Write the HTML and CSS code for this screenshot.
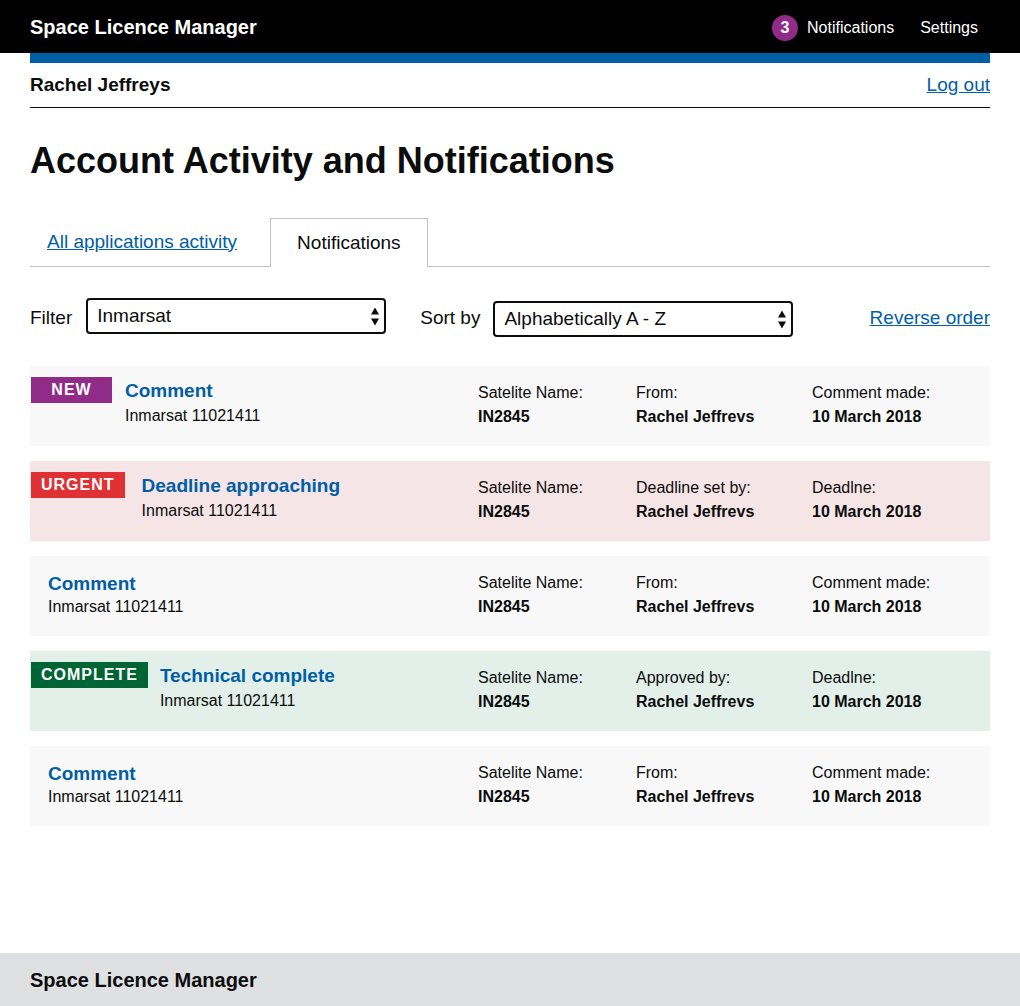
FILE: index.html
```html
<!DOCTYPE html>
<html lang="en">
<head>
<meta charset="utf-8">
<title>Space Licence Manager</title>
<link rel="stylesheet" href="styles.css">
</head>
<body>
<header class="top">
  <div class="brand">Space Licence Manager</div>
  <nav class="topnav">
    <span class="badge">3</span>
    <a class="navlink" href="#">Notifications</a>
    <a class="navlink settings" href="#">Settings</a>
  </nav>
</header>
<div class="wrap">
  <div class="bluebar"></div>
  <div class="userrow">
    <span class="username">Rachel Jeffreys</span>
    <a class="link" href="#">Log out</a>
  </div>
  <h1 class="title">Account Activity and Notifications</h1>
  <div class="tabs">
    <a class="tab link" href="#">All applications activity</a>
    <span class="tab active">Notifications</span>
  </div>
  <div class="filters">
    <label class="flabel">Filter</label>
    <div class="select sel-filter">
      <span>Inmarsat</span>
      <svg class="arrows" width="8" height="19" viewBox="0 0 8 19"><path d="M0 7.5 L4 0.5 L8 7.5 Z M0 11.5 L8 11.5 L4 18.5 Z" fill="#0b0c0c"/></svg>
    </div>
    <label class="flabel sortlabel">Sort by</label>
    <div class="select sel-sort">
      <span>Alphabetically A - Z</span>
      <svg class="arrows" width="8" height="19" viewBox="0 0 8 19"><path d="M0 7.5 L4 0.5 L8 7.5 Z M0 11.5 L8 11.5 L4 18.5 Z" fill="#0b0c0c"/></svg>
    </div>
    <a class="link reverse" href="#">Reverse order</a>
  </div>

  <div class="list">
    <div class="item grey">
      <div class="main tagged">
        <span class="tag tag-new">NEW</span>
        <div class="head">
          <a class="itemtitle" href="#">Comment</a>
          <div class="sub">Inmarsat 11021411</div>
        </div>
      </div>
      <div class="col"><div class="lbl">Satelite Name:</div><div class="val">IN2845</div></div>
      <div class="col"><div class="lbl">From:</div><div class="val">Rachel Jeffrevs</div></div>
      <div class="col"><div class="lbl">Comment made:</div><div class="val">10 March 2018</div></div>
    </div>

    <div class="item pink">
      <div class="main tagged">
        <span class="tag tag-urgent">URGENT</span>
        <div class="head">
          <a class="itemtitle" href="#">Deadline approaching</a>
          <div class="sub">Inmarsat 11021411</div>
        </div>
      </div>
      <div class="col"><div class="lbl">Satelite Name:</div><div class="val">IN2845</div></div>
      <div class="col"><div class="lbl">Deadline set by:</div><div class="val">Rachel Jeffrevs</div></div>
      <div class="col"><div class="lbl">Deadlne:</div><div class="val">10 March 2018</div></div>
    </div>

    <div class="item grey">
      <div class="main plain">
        <div class="head">
          <a class="itemtitle" href="#">Comment</a>
          <div class="sub">Inmarsat 11021411</div>
        </div>
      </div>
      <div class="col"><div class="lbl">Satelite Name:</div><div class="val">IN2845</div></div>
      <div class="col"><div class="lbl">From:</div><div class="val">Rachel Jeffrevs</div></div>
      <div class="col"><div class="lbl">Comment made:</div><div class="val">10 March 2018</div></div>
    </div>

    <div class="item green">
      <div class="main tagged">
        <span class="tag tag-complete">COMPLETE</span>
        <div class="head">
          <a class="itemtitle" href="#">Technical complete</a>
          <div class="sub">Inmarsat 11021411</div>
        </div>
      </div>
      <div class="col"><div class="lbl">Satelite Name:</div><div class="val">IN2845</div></div>
      <div class="col"><div class="lbl">Approved by:</div><div class="val">Rachel Jeffrevs</div></div>
      <div class="col"><div class="lbl">Deadlne:</div><div class="val">10 March 2018</div></div>
    </div>

    <div class="item grey">
      <div class="main plain">
        <div class="head">
          <a class="itemtitle" href="#">Comment</a>
          <div class="sub">Inmarsat 11021411</div>
        </div>
      </div>
      <div class="col"><div class="lbl">Satelite Name:</div><div class="val">IN2845</div></div>
      <div class="col"><div class="lbl">From:</div><div class="val">Rachel Jeffrevs</div></div>
      <div class="col"><div class="lbl">Comment made:</div><div class="val">10 March 2018</div></div>
    </div>
  </div>
</div>
<footer class="foot">Space Licence Manager</footer>
</body>
</html>
```

FILE: styles.css
```css
* { box-sizing: border-box; }
html, body { margin: 0; padding: 0; }
body {
  font-family: "Liberation Sans", Arial, Helvetica, sans-serif;
  color: #0b0c0c;
  background: #fff;
}
a { color: #005ea5; }

.top {
  background: #000;
  height: 53px;
  display: flex;
  align-items: center;
  justify-content: space-between;
  padding: 2px 42px 0 30px;
}
.brand {
  color: #fff;
  font-weight: bold;
  font-size: 20px;
}
.topnav {
  display: flex;
  align-items: center;
}
.badge {
  width: 26px;
  height: 26px;
  border-radius: 50%;
  background: #912b88;
  color: #fff;
  font-weight: bold;
  font-size: 16px;
  display: flex;
  align-items: center;
  justify-content: center;
  margin-right: 9px;
}
.navlink {
  color: #fff;
  text-decoration: none;
  font-size: 16px;
}
.settings { margin-left: 26px; }

.wrap { padding: 0 30px; }
.bluebar {
  height: 10px;
  background: #005ea5;
}
.userrow {
  height: 45px;
  display: flex;
  align-items: center;
  justify-content: space-between;
  border-bottom: 1px solid #0b0c0c;
  padding-bottom: 0;
}
.username {
  font-weight: bold;
  font-size: 19px;
}
.userrow .link { font-size: 19px; }

.title {
  font-size: 36px;
  font-weight: bold;
  line-height: 43px;
  margin: 31px 0 0;
}

.tabs {
  margin-top: 36px;
  display: flex;
  align-items: stretch;
  height: 49px;
  border-bottom: 1px solid #bfc1c3;
}
.tab {
  font-size: 19px;
  display: flex;
  align-items: center;
}
.tabs .link {
  padding: 0 33px 0 17px;
  margin-bottom: 1px;
}
.tab.active {
  border: 1px solid #bfc1c3;
  border-bottom: none;
  background: #fff;
  padding: 0 26px 1px;
  margin-bottom: -1px;
  height: 49px;
}

.filters {
  margin-top: 30px;
  display: flex;
  align-items: center;
  height: 40px;
  font-size: 19px;
  padding-top: 1px;
}
.flabel { margin-right: 14px; }
.sortlabel { margin-left: 34px; margin-right: 13px; }
.select {
  width: 300px;
  height: 36px;
  border: 2px solid #0b0c0c;
  border-radius: 4px;
  display: flex;
  align-items: center;
  justify-content: space-between;
  padding: 0 5px 0 9px;
  background: #fff;
}
.sel-filter { margin-bottom: 3px; }
.sel-sort { margin-top: 3px; }
.arrows { display: block; }
.reverse { margin-left: auto; }

.list {
  margin-top: 29px;
  display: flex;
  flex-direction: column;
  gap: 15px;
  margin-bottom: 127px;
}
.item {
  height: 80px;
  display: grid;
  grid-template-columns: 448px 158px 176px 1fr;
  align-items: start;
}
.grey { background: #f8f8f8; }
.pink { background: #f6e5e7; }
.green { background: #e3f0ea; }

.main { display: flex; align-items: flex-start; }
.main.tagged { padding: 11px 0 0 1px; }
.main.plain { padding: 16px 0 0 18px; }
.tag {
  height: 26px;
  min-width: 81px;
  display: flex;
  align-items: center;
  justify-content: center;
  padding: 0 10px 0 10px;
  color: #fff;
  font-weight: bold;
  font-size: 16px;
  letter-spacing: 1px;
  margin-right: 13px;
}
.tag-new { background: #912b88; }
.tag-urgent { background: #df3034; margin-right: 17px; }
.tag-complete { background: #006435; margin-right: 12px; }
.head { display: flex; flex-direction: column; }
.tagged .head { margin-top: 2px; }
.itemtitle {
  font-weight: bold;
  font-size: 19px;
  line-height: 24px;
  text-decoration: none;
}
.sub {
  font-size: 16px;
  line-height: 20px;
  margin-top: 1px;
}
.tagged .sub { margin-top: 3px; }
.col {
  padding-top: 17px;
  font-size: 16px;
  line-height: 20px;
}
.lbl { margin-bottom: 4px; }
.val { font-weight: bold; }

.foot {
  background: #dee0e2;
  font-weight: bold;
  font-size: 20px;
  padding: 16px 30px 40px;
}
```
